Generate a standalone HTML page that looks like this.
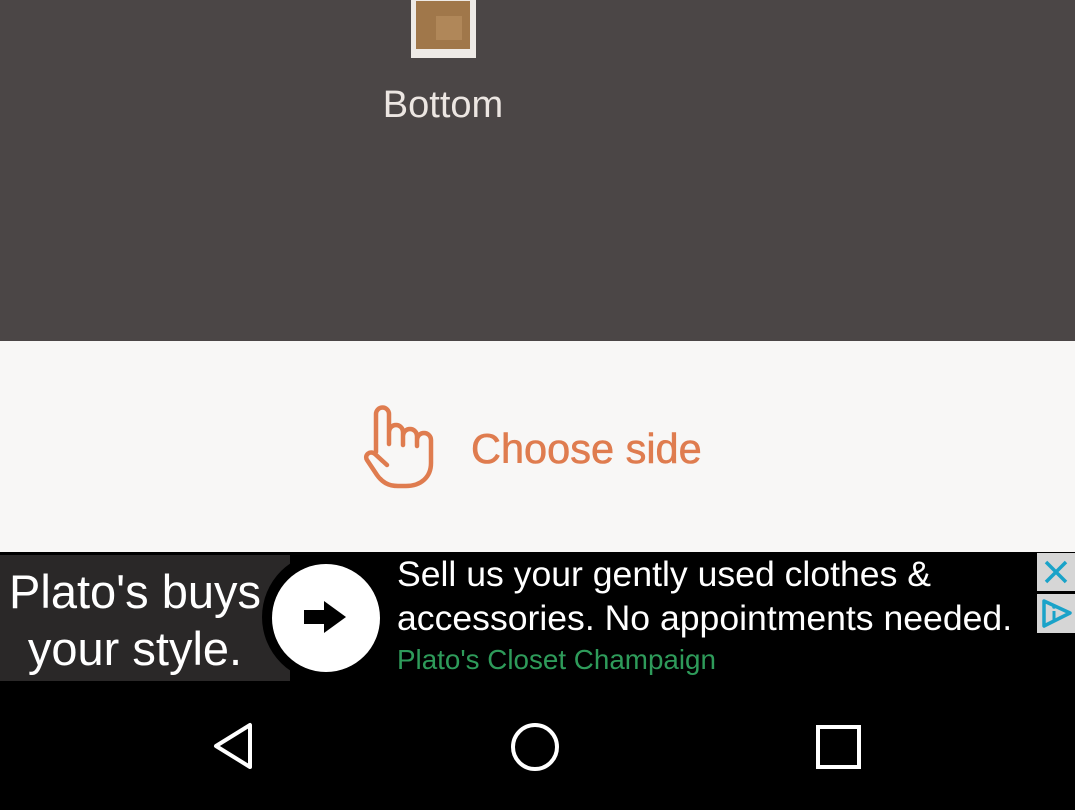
<!DOCTYPE html>
<html><head><meta charset="utf-8"><style>
*{margin:0;padding:0;box-sizing:border-box}
body{width:1075px;height:810px;overflow:hidden;background:#000;font-family:"Liberation Sans",sans-serif;position:relative}
.top{position:absolute;left:0;top:0;width:1075px;height:341px;background:#4b4646}
.tile{position:absolute;left:411px;top:-4px;width:65px;height:62px;background:#eeeae6}
.tile .in{position:absolute;left:5px;top:5px;width:54px;height:48px;background:#a0774a}
.tile .sq{position:absolute;left:20px;top:15px;width:26px;height:24px;background:#b08759}
.bottom{position:absolute;left:0;top:84px;width:886px;text-align:center;color:#ece6e2;font-size:38px}
.mid{position:absolute;left:0;top:341px;width:1075px;height:211px;background:#f8f7f6}
.choose{position:absolute;left:471px;top:84px;font-size:41.5px;color:#df7c4f;white-space:nowrap;-webkit-text-stroke:0.6px #df7c4f}
.ad{position:absolute;left:0;top:552px;width:1075px;height:130px;background:#000}
.adl{position:absolute;left:0;top:3px;width:290px;height:126px;background:#2a2828}
.adt{position:absolute;left:0;top:8px;width:270px;color:#fff;font-size:47px;line-height:57px;text-align:center}
.circ{position:absolute;left:262px;top:0;width:130px;height:130px;border-radius:50%;background:#000}
.circ2{position:absolute;left:272px;top:12px;width:108px;height:108px;border-radius:50%;background:#fff}
.t1{position:absolute;left:397px;top:0px;color:#fff;font-size:35.6px;line-height:44px;white-space:nowrap}
.t2{position:absolute;left:397px;top:92px;color:#2e9b5a;font-size:27.8px;white-space:nowrap}
.x{position:absolute;left:1037px;top:1px;width:38px;height:38px;background:#d6d6d6}
.p{position:absolute;left:1037px;top:42px;width:38px;height:39px;background:#d6d6d6}
.nav{position:absolute;left:0;top:682px;width:1075px;height:128px;background:#000}
</style></head><body>
<div class="top">
 <div class="tile"><div class="in"><div class="sq"></div></div></div>
 <div class="bottom">Bottom</div>
</div>
<div class="mid">
 <svg style="position:absolute;left:355px;top:59px" width="90" height="95" viewBox="355 400 90 95">
  <path d="M376 452 V414 a6.5 6.5 0 0 1 13 0 V444 M389 432 a7 7 0 0 1 14 0 V445 M403 436 a7 7 0 0 1 14 0 V446 M417 440 a7 7 0 0 1 14 0 V463 c0 14 -10 23 -25 23 h-8 c-10 0 -16 -4 -21 -11 l-10 -15 c-3 -5 3 -10 8 -6 l12 11" fill="none" stroke="#df7c4f" stroke-width="4.5" stroke-linecap="round" stroke-linejoin="round"/>
 </svg>
 <div class="choose">Choose side</div>
</div>
<div class="ad">
 <div class="adl"><div class="adt">Plato's buys<br>your style.</div></div>
 <div class="circ"></div><div class="circ2"></div>
 <svg style="position:absolute;left:302px;top:47px" width="46" height="36" viewBox="0 0 46 36"><path d="M2 11 H22 V2 L44 18 L22 34 V25 H2 Z" fill="#000"/></svg>
 <div class="t1">Sell us your gently used clothes &amp;<br>accessories. No appointments needed.</div>
 <div class="t2">Plato's Closet Champaign</div>
 <div class="x"><svg width="38" height="38"><path d="M9 9 L29 29 M29 9 L9 29" stroke="#1aa3c9" stroke-width="3.5"/></svg></div>
 <div class="p"><svg width="38" height="39"><path d="M7 7 L33 19 L7 32 Z" fill="none" stroke="#1aa3c9" stroke-width="3.5" stroke-linejoin="round"/><path d="M17 17 V26" stroke="#1aa3c9" stroke-width="3"/><circle cx="17" cy="13" r="1.8" fill="#1aa3c9"/></svg></div>
</div>
<div class="nav">
 <svg style="position:absolute;left:210px;top:40px" width="50" height="50"><path d="M40 3 V45 L6 24 Z" fill="none" stroke="#fff" stroke-width="4" stroke-linejoin="round"/></svg>
 <svg style="position:absolute;left:509px;top:40px" width="54" height="54"><circle cx="26" cy="25" r="22" fill="none" stroke="#fff" stroke-width="4"/></svg>
 <svg style="position:absolute;left:815px;top:42px" width="48" height="46"><rect x="3" y="3" width="41" height="40" fill="none" stroke="#fff" stroke-width="4"/></svg>
</div>
</body></html>
